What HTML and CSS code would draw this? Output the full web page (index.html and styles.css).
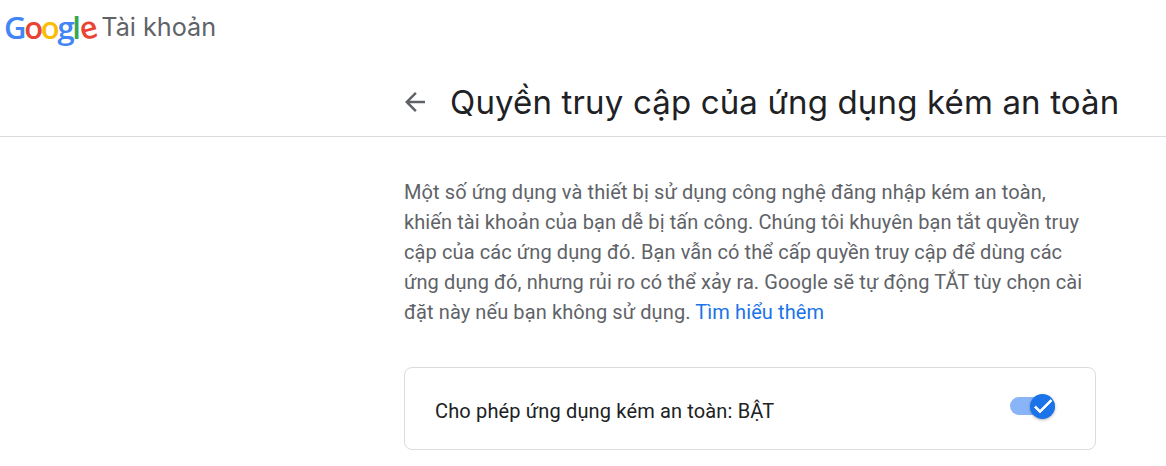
FILE: index.html
```html
<!DOCTYPE html>
<html lang="vi">
<head>
    <meta charset="UTF-8">
    <meta name="viewport" content="width=device-width, initial-scale=1.0">
    <title>Quyền truy cập của ứng dụng kém an toàn</title>
    <link rel="stylesheet" href="styles.css">
</head>
<body>
    <header class="top-bar">
        <span class="logo"><span class="blue">G</span><span class="red">o</span><span class="yellow">o</span><span class="blue">g</span><span class="green">l</span><span class="red tilt">e</span></span>
        <span class="product-name">Tài khoản</span>
    </header>

    <div class="title-row">
        <a class="back-link" href="#">
            <svg width="30" height="30" viewBox="0 0 24 24"><path d="M20 11H7.83l5.59-5.59L12 4l-8 8 8 8 1.41-1.41L7.83 13H20v-2z"/></svg>
        </a>
        <h1>Quyền truy cập của ứng dụng kém an toàn</h1>
    </div>

    <main class="content">
        <p class="description">Một số ứng dụng và thiết bị sử dụng công nghệ đăng nhập kém an toàn, khiến tài khoản của bạn dễ bị tấn công. Chúng tôi khuyên bạn tắt quyền truy cập của các ứng dụng đó. Bạn vẫn có thể cấp quyền truy cập để dùng các ứng dụng đó, nhưng rủi ro có thể xảy ra. Google sẽ tự động TẮT tùy chọn cài đặt này nếu bạn không sử dụng. <a href="#">Tìm hiểu thêm</a></p>

        <div class="setting-card">
            <span class="setting-label">Cho phép ứng dụng kém an toàn: BẬT</span>
            <span class="switch">
                <span class="switch-thumb">
                    <svg width="24" height="24" viewBox="0 0 24 24"><path d="M9 16.2 4.8 12l-1.4 1.4L9 19 21 7l-1.4-1.4z"/></svg>
                </span>
            </span>
        </div>
    </main>
</body>
</html>
```

FILE: styles.css
```css
* {
    box-sizing: border-box;
    margin: 0;
    padding: 0;
}
html, body {
    height: 466px;
    overflow: hidden;
}
body {
    font-family: Roboto, 'Liberation Sans', sans-serif;
    background-color: #fff;
    color: #202124;
}
.top-bar {
    display: flex;
    align-items: center;
    height: 54px;
    padding-left: 4px;
}
.logo {
    font-family: 'Open Sans', sans-serif;
    font-size: 31px;
    font-weight: 600;
    letter-spacing: -2.3px;
    margin-right: 7px;
}
.blue { color: #4285f4; }
.red { color: #ea4335; }
.yellow { color: #fbbc05; }
.green { color: #34a853; }
.tilt {
    display: inline-block;
    transform: rotate(-14deg);
}
.product-name {
    font-family: Inter, Roboto, sans-serif;
    font-size: 25.2px;
    color: #5f6368;
}
.title-row {
    display: flex;
    align-items: center;
    height: 83px;
    padding-left: 400px;
    padding-top: 13px;
    border-bottom: 1px solid #dadce0;
}
.back-link {
    display: flex;
    margin-right: 20px;
}
.back-link svg {
    fill: #5f6368;
}
h1 {
    font-family: Inter, Roboto, sans-serif;
    font-size: 33px;
    font-weight: 400;
    letter-spacing: 0.15px;
    white-space: nowrap;
}
.content {
    width: 692px;
    margin-left: 404px;
    padding-top: 40px;
}
.description {
    max-width: 684px;
    font-size: 20px;
    line-height: 30px;
    letter-spacing: 0.1px;
    color: #5f6368;
}
.description a {
    color: #1a73e8;
    text-decoration: none;
}
.setting-card {
    display: flex;
    align-items: center;
    justify-content: space-between;
    height: 83px;
    margin-top: 40px;
    padding: 0 40px 0 30px;
    border: 1px solid #dadce0;
    border-radius: 8px;
}
.setting-label {
    font-size: 20px;
    letter-spacing: 0.15px;
    margin-top: 5px;
}
.switch {
    display: flex;
    align-items: center;
    justify-content: flex-end;
    width: 45px;
    height: 18px;
    margin-bottom: 5px;
    border-radius: 9px;
    background-color: #8ab4f8;
}
.switch-thumb {
    display: flex;
    align-items: center;
    justify-content: center;
    width: 25px;
    height: 25px;
    flex-shrink: 0;
    border-radius: 50%;
    background-color: #1a73e8;
    box-shadow: 0 1px 3px rgba(0,0,0,0.3);
}
.switch-thumb svg {
    fill: #fff;
    stroke: #fff;
    stroke-width: 0.8;
    flex-shrink: 0;
}
```
